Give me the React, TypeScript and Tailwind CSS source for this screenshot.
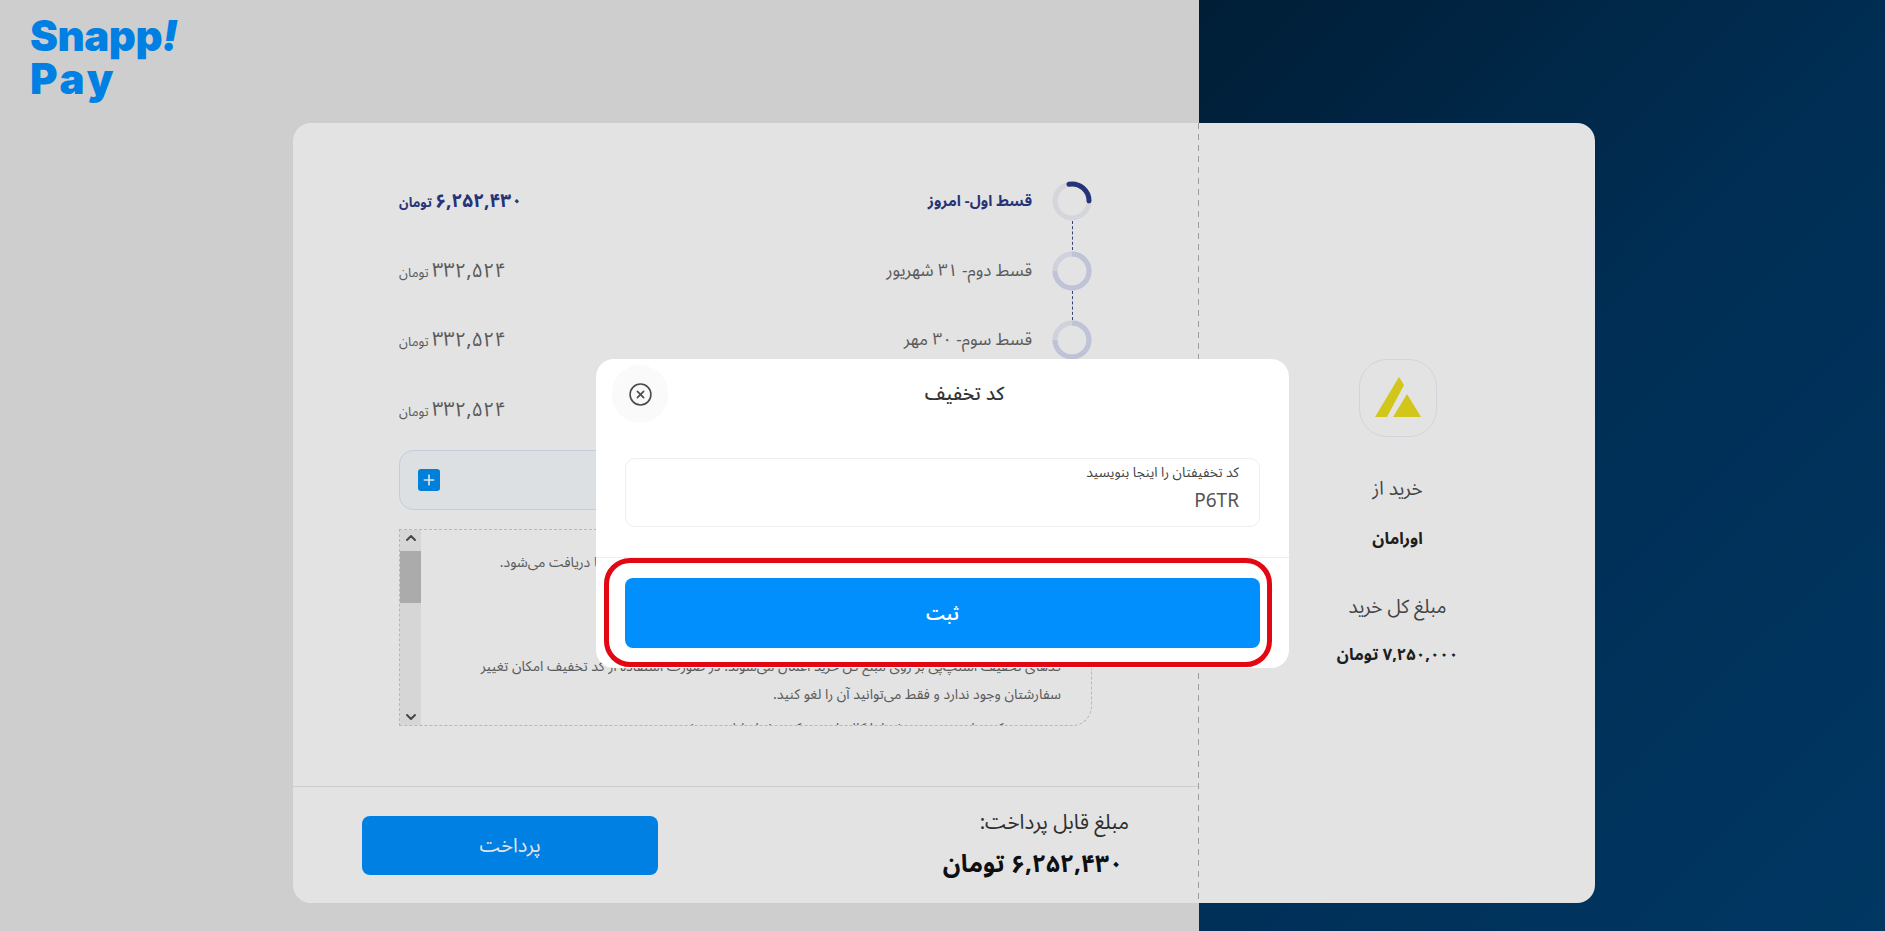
import React from 'react';
import { Plus, ChevronUp, ChevronDown, CircleX } from 'lucide-react';

const FONT = "font-['Noto_Sans','Noto_Sans_Arabic','DejaVu_Sans',sans-serif]";

const installments = [
  { title: 'قسط اول- امروز', amount: '۶,۲۵۲,۴۳۰', active: true },
  { title: 'قسط دوم- ۳۱ شهریور', amount: '۳۳۲,۵۲۴', active: false },
  { title: 'قسط سوم- ۳۰ مهر', amount: '۳۳۲,۵۲۴', active: false },
  { title: 'قسط چهارم- ۳۰ آبان', amount: '۳۳۲,۵۲۴', active: false },
];

const StepRing: React.FC<{ active: boolean }> = ({ active }) => (
  <svg width="40" height="40" viewBox="0 0 40 40" className="shrink-0">
    <circle cx="20" cy="20" r="17" fill="none" stroke={active ? '#f0f1f8' : '#e9ecf8'} strokeWidth="5" />
    {active ? (
      <path d="M17 3.2 A17 17 0 0 1 37 20" fill="none" stroke="#2b3a86" strokeWidth="5" strokeLinecap="round" />
    ) : (
      <path d="M20 3 A17 17 0 1 1 3 20" fill="none" stroke="#d7dcf3" strokeWidth="5" />
    )}
  </svg>
);

export default function App() {
  return (
    <div className={`relative h-[931px] w-[1885px] overflow-hidden ${FONT}`}>
      <div className="flex h-full">
        {/* page backgrounds */}
        <div className="w-[1199px] bg-[#e8e8e8] pl-[30px] pt-[14px]">
          <div className="font-['Inter',sans-serif] text-[42px] font-black leading-[43px] text-[#0090ff]">
            <div className="tracking-[-0.5px]">Snapp<span className="italic">!</span></div>
            <div className="tracking-[3px]">Pay</div>
          </div>
        </div>
        <div className="flex-1 bg-[linear-gradient(135deg,#00223d_0%,#00345f_45%,#003f70_100%)]" />
      </div>

      {/* card */}
      <div dir="rtl" className="absolute left-[293px] top-[123px] flex h-[780px] w-[1302px] rounded-[18px] bg-white text-[#4d4d4d]">
        <div className="flex w-[396px] shrink-0 flex-col items-center pt-[236px] pl-[1px]">
          <div className="flex h-[78px] w-[78px] items-center justify-center rounded-[28px] border-[1.5px] border-[#eeeef6]">
            <svg width="46" height="42" viewBox="0 0 46 42">
              <path d="M0 40 L24 0 L29 8 L12 40 Z" fill="#ecdf1f" />
              <path d="M18 40 L32 17 L46 40 Z" fill="#ecdf1f" />
            </svg>
          </div>
          <p className="mt-[39px] text-[19px] leading-[24px]">خرید از</p>
          <p className="mt-[26px] text-[16.5px] font-bold leading-[24px] text-[#222]">اورامان</p>
          <p className="mt-[44px] text-[19px] leading-[24px]">مبلغ کل خرید</p>
          <p className="mt-[24px] text-[16.5px] font-bold leading-[24px] text-[#222]">۷,۲۵۰,۰۰۰ تومان</p>
        </div>

        <div className="relative flex flex-1 flex-col">
          <span className="absolute right-0 top-0 h-full w-[1px] bg-[repeating-linear-gradient(180deg,#b0b0b0_0,#b0b0b0_6px,transparent_6px,transparent_11px)]" />
          <div className="flex-1 pr-[107px] pl-[106px] pt-[58px]">
            {installments.map((row, i) => (
              <div key={row.title} className="relative flex h-[69.5px] items-start">
                <StepRing active={row.active} />
                {i < installments.length - 1 && (
                  <span className="absolute right-[19.5px] top-[40px] h-[29px] border-r border-dashed border-[#3d4a86]" />
                )}
                <p className={`mr-[20px] flex-1 leading-[38px] ${row.active ? 'text-[15px] font-bold text-[#2b3a86]' : 'text-[17px] text-[#666]'}`}>
                  {row.title}
                </p>
                <p className={`text-[13px] leading-[38px] ${row.active ? 'font-bold text-[#2b3a86]' : 'text-[#666]'}`}>
                  <span className={row.active ? 'text-[19px]' : 'text-[20px]'}>{row.amount}</span> تومان
                </p>
              </div>
            ))}
            <div className="mt-[-9px] flex h-[60px] items-center rounded-[14px] border border-[#dbe6f7] bg-[#f9fcff]">
              <div className="mr-auto ml-[18px] flex h-[22px] w-[22px] items-center justify-center rounded-[3px] bg-[#0090f5] text-white">
                <Plus size={16} strokeWidth={2.5} />
              </div>
            </div>
            <div className="relative mt-[19px] flex h-[197px] overflow-hidden rounded-br-[20px] border border-dashed border-[#cfcfcf]">
              <div className="flex-1 pr-[30px] pl-[40px] text-[14px] leading-[28px] text-[#666]">
                <p className="pt-[18px]">مبلغ قسط اول به همراه کارمزد خدمات اسنپ‌پی هنگام ثبت خرید از حساب بانکی شما دریافت می‌شود.</p>
                <p className="pt-[76px]">کدهای تخفیف اسنپ‌پی بر روی مبلغ کل خرید اعمال می‌شوند. در صورت استفاده از کد تخفیف امکان تغییر سفارشتان وجود ندارد و فقط می‌توانید آن را لغو کنید.</p>
                <p className="pt-[6px]">در صورتی که مبلغ سبد خرید شما با کالاها تغییر کند، شرایط لغو می‌شود.</p>
              </div>
              <div className="relative flex w-[21px] shrink-0 flex-col items-center justify-between bg-[#f1f1f1] text-[#505050]">
                <ChevronUp size={16} strokeWidth={3} />
                <span className="absolute left-0 top-[21px] h-[52px] w-[21px] bg-[#c1c1c1]" />
                <ChevronDown size={16} strokeWidth={3} />
              </div>
            </div>
          </div>
          <div className="flex h-[117px] items-center justify-between border-t border-[#e8e8e8] pr-[70px] pl-[69px]">
            <div className="pb-[4px]">
              <p className="text-[20.5px] leading-[26px] text-[#333]">مبلغ قابل پرداخت:</p>
              <p className="mt-[13px] pr-[6px] text-[24.5px] font-bold leading-[32px] text-[#111]">۶,۲۵۲,۴۳۰ تومان</p>
            </div>
            <button className="h-[59px] w-[296px] rounded-[8px] bg-[#0090ff] text-[20px] text-white">پرداخت</button>
          </div>
        </div>
      </div>

      {/* dim layer + modal */}
      <div className="absolute inset-0 bg-black/[0.11]" />
      <div dir="rtl" className="absolute left-[596px] top-[359px] w-[693px] rounded-[18px] bg-white">
        <div className="relative flex h-[99px] items-start justify-center pt-[20px] pl-[44px]">
          <h3 className="text-[19px] font-medium leading-[28px] text-[#333]">کد تخفیف</h3>
          <span className="absolute left-[16px] top-[6px] flex h-[58px] w-[56px] items-center justify-center rounded-full bg-[#fafafa] text-[#4a4a4a]">
            <CircleX size={25} strokeWidth={1.5} />
          </span>
        </div>
        <div className="mx-[29px] h-[69px] rounded-[10px] border border-[#eeeeee] px-[20px] pt-[3px]">
          <p className="text-[13.7px] leading-[20px] text-[#444]">کد تخفیفتان را اینجا بنویسید</p>
          <p className="mt-[6px] text-[19px] leading-[24px] text-[#555]">P6TR</p>
        </div>
        <div className="mt-[30px] border-t border-[#eeeeee] px-[29px] pt-[20px] pb-[20px]">
          <button className="h-[70px] w-full rounded-[8px] bg-[#008ffc] text-[18px] font-semibold text-white">ثبت</button>
        </div>
        <span className="absolute left-[8px] right-[17px] top-[199px] h-[109px] rounded-[26px] border-[5px] border-[#e30613]" />
      </div>
    </div>
  );
}
